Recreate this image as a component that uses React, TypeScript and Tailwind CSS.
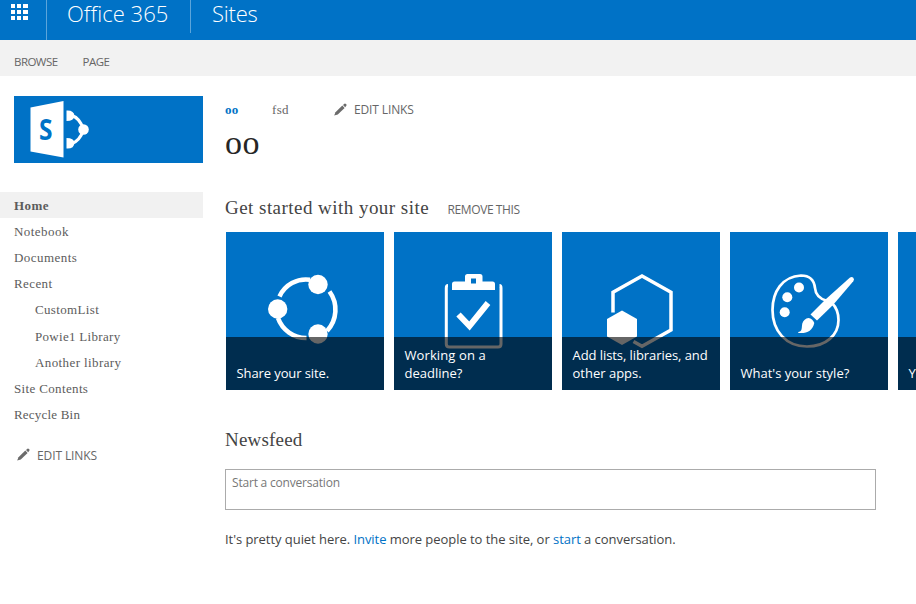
import type { ReactNode } from "react";

const SANS = "font-['Open_Sans','Noto_Sans',sans-serif]";
const SERIF = "font-['Liberation_Serif',serif]";

function Pencil() {
  return (
    <svg width="13" height="13" viewBox="0 0 13 13" fill="#6b6b6b" className="relative -top-px shrink-0">
      <path d="M0.2 12.6 L1.5 9.2 L8.3 2.6 L10.6 4.9 L3.8 11.5 Z" />
      <path d="M9 2 L10.4 0.7 Q11.2 0.2 11.9 0.9 L12.3 1.3 Q12.9 2 12.3 2.7 L11.2 4.2 Z" />
    </svg>
  );
}

function ShareIcon() {
  return (
    <svg width="158" height="158" viewBox="0 0 158 158" fill="none" stroke="#fff" strokeWidth="4.6">
      <path d="M53.5 64.5 A29 29 0 0 1 84 47.8" />
      <path d="M103.5 59.5 A31 31 0 0 1 101 99" />
      <path d="M52 86 A30 30 0 0 0 80.5 106" />
      <g fill="#fff" stroke="none">
        <circle cx="92" cy="52.5" r="9.7" />
        <circle cx="51.7" cy="77" r="9.7" />
        <circle cx="92" cy="102" r="9.7" />
      </g>
    </svg>
  );
}

function ClipboardIcon() {
  return (
    <svg width="158" height="158" viewBox="0 0 158 158" fill="none" stroke="#fff">
      <path strokeWidth="3" d="M54 53.5 Q52.3 53.5 52.3 56 V112 Q52.3 115 55.5 115 H104 Q107 115 107 112 V56 Q107 53.5 105.5 53.5" />
      <path fill="#fff" stroke="none" fillRule="evenodd" d="M58 58 V52 Q58 49.5 60.5 49.5 H71 V44.5 Q71 42 73.5 42 H86 Q88.5 42 88.5 44.5 V49.5 H98.5 Q101 49.5 101 52 V58 Z M77 46.5 V51.5 H82 V46.5 Z" />
      <path strokeWidth="6" d="M64.5 82.5 L75.5 94 L94 71" />
    </svg>
  );
}

function HexIcon() {
  return (
    <svg width="158" height="158" viewBox="0 0 158 158" fill="none" stroke="#fff" strokeWidth="3.5">
      <path d="M51 80.5 V60.3 L80 44 L109 60.3 V98 L80 114.3 L71.5 109.5" />
      <path fill="#fff" stroke="none" d="M60 78.5 L75 87 V104.5 L60 113 L45 104.5 V87 Z" />
    </svg>
  );
}

function PaletteIcon() {
  return (
    <svg width="158" height="158" viewBox="0 0 158 158" fill="none" stroke="#fff">
      <path
        strokeWidth="2.7"
        d="M96 68.5 C88 66 85.5 62 85 56 C84 47 79 43.5 71 43.5 C52 44.5 42.5 60 42.5 78 C42.5 99 56 114.5 77 114.5 C96 114.5 108.5 103 108.5 88 C108.5 80 106 75 102 71"
      />
      <g fill="#fff" stroke="none">
        <circle cx="69" cy="55.5" r="5" />
        <circle cx="57.3" cy="65.3" r="5" />
        <circle cx="54.7" cy="80.3" r="5" />
        <path d="M80.5 82.5 L96 67 L120 45.6 Q121.8 44.2 123.3 45.7 Q124.8 47.2 123.3 49.2 L103 73 L87 88.5 Z" />
        <path d="M78.5 86 Q82.5 86.5 84.3 91 C82.5 99 77 101.7 68.5 101 C67.8 100.5 68.2 100 69 99.8 C72.5 99 71.5 95.5 72.3 91.5 Q74 86.5 78.5 86 Z" />
      </g>
    </svg>
  );
}

function Tile({ icon, children }: { icon?: ReactNode; children: ReactNode }) {
  return (
    <div className="relative h-[158px] w-[158px] shrink-0 overflow-hidden bg-[#0072c6]">
      {icon}
      <div className="absolute inset-x-0 bottom-0 flex h-[53px] flex-col justify-end bg-black/60 pb-2 pl-[10.5px] text-[13px] leading-[18px] whitespace-nowrap text-white">
        {children}
      </div>
    </div>
  );
}

function NavItem({ label, className = "" }: { label: string; className?: string }) {
  return (
    <li className="flex h-[26.2px] items-center pt-px">
      <a className={`whitespace-nowrap ${className}`}>{label}</a>
    </li>
  );
}

function SuiteBar() {
  return (
    <header className="flex h-10 bg-[#0072c6] text-[22px] leading-[27px] font-light text-white">
      <div className="w-[47px] border-r border-[#5ca5db] pt-1 pl-[11px]">
        <svg width="17" height="16" fill="#fff" shapeRendering="crispEdges">
          {[0, 6, 12].map((y) =>
            [0, 6, 12].map((x) => <rect key={`${x}-${y}`} x={x} y={y} width={x === 12 ? 5 : 4} height="4" />),
          )}
        </svg>
      </div>
      <div className="h-[33px] w-36 border-r border-[#5ca5db] pl-5">
        <span className="whitespace-nowrap tracking-[0.05px]">Office 365</span>
      </div>
      <span className="pl-[21px] tracking-[-0.2px]">Sites</span>
    </header>
  );
}

export default function App() {
  return (
    <div className={`h-[604px] w-[916px] overflow-hidden bg-white text-[#444] ${SANS}`}>
      <SuiteBar />
      <div className="flex h-9 gap-[25px] bg-[#f2f2f2] pt-[13px] pl-3.5 text-[11.5px] leading-[18px] text-[#666]">
        <span className="tracking-[-0.55px]">BROWSE</span>
        <span className="tracking-[-0.5px]">PAGE</span>
      </div>
      <div className="flex">
        <aside className="w-[203px] shrink-0 pt-5">
          <div className="ml-3.5 h-[67px] bg-[#0072c6]">
            <svg width="189" height="67" viewBox="0 0 189 67">
              <path fill="#fff" d="M16.5 11.5 L49.5 5 V61.5 L16.5 55.5 Z" />
              <text x="25" y="43.5" fill="#0072c6" fontSize="28" fontWeight="700" fontFamily="Open Sans" textLength="13.5" lengthAdjust="spacingAndGlyphs">S</text>
              <path fill="none" stroke="#fff" strokeWidth="3" d="M57 19 Q66 22 69.5 33.5 Q66 45 57 48" />
              <path fill="#fff" d="M52.5 14.5 Q60 14 60.5 20 Q60 25 52.5 25 Z M52.5 42 Q60 42 60.5 47 Q60 53 52.5 52.5 Z" />
              <circle cx="69.5" cy="33.5" r="5.3" fill="#fff" />
            </svg>
          </div>
          <ul className={`mt-[29px] text-[13px] text-[#5c5c5c] ${SERIF}`}>
            <li className="flex h-[26px] items-center bg-[#f1f1f1] pt-0.5 pl-3.5 font-bold">
              <a className="tracking-[0.4px]">Home</a>
            </li>
            <NavItem label="Notebook" className="pl-3.5 tracking-[0.45px]" />
            <NavItem label="Documents" className="pl-3.5 tracking-[0.45px]" />
            <NavItem label="Recent" className="pl-3.5 tracking-[0.4px]" />
            <NavItem label="CustomList" className="pl-[35px] tracking-[0.35px]" />
            <NavItem label="Powie1 Library" className="pl-[35px] tracking-[0.3px]" />
            <NavItem label="Another library" className="pl-[35px] tracking-[0.4px]" />
            <NavItem label="Site Contents" className="pl-3.5 tracking-[0.35px]" />
            <NavItem label="Recycle Bin" className="pl-3.5 tracking-[0.2px]" />
          </ul>
          <div className="mt-[19px] flex items-center pl-[17px] text-[12px] leading-[18px] text-[#666]">
            <Pencil />
            <span className="ml-[7px] tracking-[-0.1px]">EDIT LINKS</span>
          </div>
        </aside>
        <main className="w-[713px] pt-[25px] pl-[22px]">
          <div className="flex h-[18px] items-center text-[#666]">
            <b className={`w-[47px] text-[13px] leading-[18px] tracking-[0.3px] text-[#0072c6] ${SERIF}`}>oo</b>
            <span className={`w-[62px] text-[13px] leading-[18px] tracking-[0.3px] ${SERIF}`}>fsd</span>
            <Pencil />
            <span className="ml-[7px] text-[12px] tracking-[-0.13px]">EDIT LINKS</span>
          </div>
          <h1 className={`mt-[5px] h-[37px] text-[34px] leading-[37px] tracking-[0.4px] text-[#262626] ${SERIF}`}>oo</h1>
          <div className="mt-[35px] flex h-7 items-center">
            <h2 className={`-mt-[3px] text-[19px] whitespace-nowrap tracking-[0.46px] ${SERIF}`}>Get started with your site</h2>
            <span className="ml-[18.5px] text-[12px] whitespace-nowrap tracking-[-0.4px] text-[#666]">REMOVE THIS</span>
          </div>
          <div className="mt-2 ml-px flex gap-2.5 overflow-hidden">
            <Tile icon={<ShareIcon />}><span className="tracking-[-0.1px]">Share your site.</span></Tile>
            <Tile icon={<ClipboardIcon />}><span className="tracking-[0.1px]">Working on a</span><span>deadline?</span></Tile>
            <Tile icon={<HexIcon />}><span className="tracking-[-0.07px]">Add lists, libraries, and</span><span>other apps.</span></Tile>
            <Tile icon={<PaletteIcon />}><span>What's your style?</span></Tile>
            <Tile><span>Y</span></Tile>
          </div>
          <h2 className={`mt-[38px] h-6 text-[19px] leading-6 tracking-[0.2px] ${SERIF}`}>Newsfeed</h2>
          <div className="mt-[17px] h-[41px] w-[651px] border border-[#ababab] pt-1 pl-1.5 text-[12px] leading-[18px] text-[#777]">
            <span className="tracking-[-0.2px]">Start a conversation</span>
          </div>
          <p className="mt-5 text-[13px] leading-[18px] tracking-[-0.05px] whitespace-nowrap">
            It's pretty quiet here. <a className="text-[#0072c6]">Invite</a> more people to the site, or{" "}
            <a className="text-[#0072c6]">start</a> a conversation.
          </p>
        </main>
      </div>
    </div>
  );
}
